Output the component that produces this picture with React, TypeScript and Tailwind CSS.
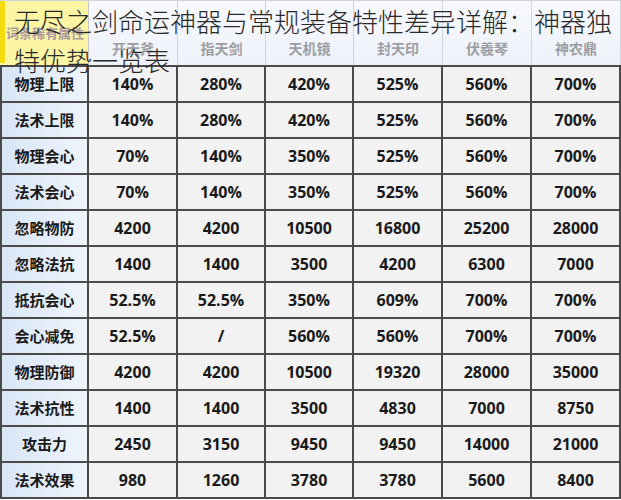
const headers = ["开天斧", "指天剑", "天机镜", "封天印", "伏羲琴", "神农鼎"];

const rows: [string, string[]][] = [
  ["物理上限", ["140%", "280%", "420%", "525%", "560%", "700%"]],
  ["法术上限", ["140%", "280%", "420%", "525%", "560%", "700%"]],
  ["物理会心", ["70%", "140%", "350%", "525%", "560%", "700%"]],
  ["法术会心", ["70%", "140%", "350%", "525%", "560%", "700%"]],
  ["忽略物防", ["4200", "4200", "10500", "16800", "25200", "28000"]],
  ["忽略法抗", ["1400", "1400", "3500", "4200", "6300", "7000"]],
  ["抵抗会心", ["52.5%", "52.5%", "350%", "609%", "700%", "700%"]],
  ["会心减免", ["52.5%", "/", "560%", "560%", "700%", "700%"]],
  ["物理防御", ["4200", "4200", "10500", "19320", "28000", "35000"]],
  ["法术抗性", ["1400", "1400", "3500", "4830", "7000", "8750"]],
  ["攻击力", ["2450", "3150", "9450", "9450", "14000", "21000"]],
  ["法术效果", ["980", "1260", "3780", "3780", "5600", "8400"]],
];

export default function App() {
  return (
    <div className="relative w-[621px] h-[500px] overflow-hidden bg-white font-['Open_Sans','Noto_Sans_CJK_SC',sans-serif]">
      <div className="grid grid-cols-[89px_89px_88px_88px_89px_89px_89px] h-[65px] border-t border-[#d0d4dc]">
        <div className="relative bg-[#fbf5a4] flex items-start pt-[22px] pl-[6px] border-r border-[#c8c8c8]">
          <div className="absolute left-0 top-0 bottom-[2px] w-[5px] bg-[#f2dc10]" />
          <span className="text-[13px] font-bold text-[#a99aa0] font-['Noto_Sans_CJK_SC',sans-serif] whitespace-nowrap">
            词条稀有属性
          </span>
        </div>
        {headers.map((h) => (
          <div
            key={h}
            className="flex items-center justify-center pt-[30px] bg-gradient-to-b from-[#f7f9fd] to-[#eef2f9] border-r border-[#d0d4dc] text-[14px] font-bold text-[#9c9ea4] font-['Noto_Sans_CJK_SC',sans-serif]"
          >
            {h}
          </div>
        ))}
      </div>
      <div className="border-t-2 border-l-2 border-[#4a4a4a]">
        {rows.map(([label, vals]) => (
          <div
            key={label}
            className="grid grid-cols-[87px_89px_88px_88px_89px_89px_89px] h-[36px] border-b-2 border-[#4a4a4a]"
          >
            <div className="flex items-center justify-center bg-gradient-to-r from-[#d9e6f6] to-[#eef4fb] border-r-2 border-[#4a4a4a] text-[15px] font-bold text-[#1a1a1a] font-['Noto_Sans_CJK_SC',sans-serif]">
              {label}
            </div>
            {vals.map((v, i) => (
              <div
                key={i}
                className="flex items-center justify-center bg-[#f2f2f2] border-r-2 border-[#4a4a4a] text-[16px] font-bold text-[#1a1a1a]"
              >
                {v}
              </div>
            ))}
          </div>
        ))}
      </div>
      <div className="absolute top-0 left-0 w-[621px] pl-[14px] pt-[1px] text-[26px] leading-[39px] text-[#2a2a2a] font-['Noto_Sans_CJK_SC',sans-serif] font-light">
        无尽之剑命运神器与常规装备特性差异详解：神器独特优势一览表
      </div>
    </div>
  );
}
